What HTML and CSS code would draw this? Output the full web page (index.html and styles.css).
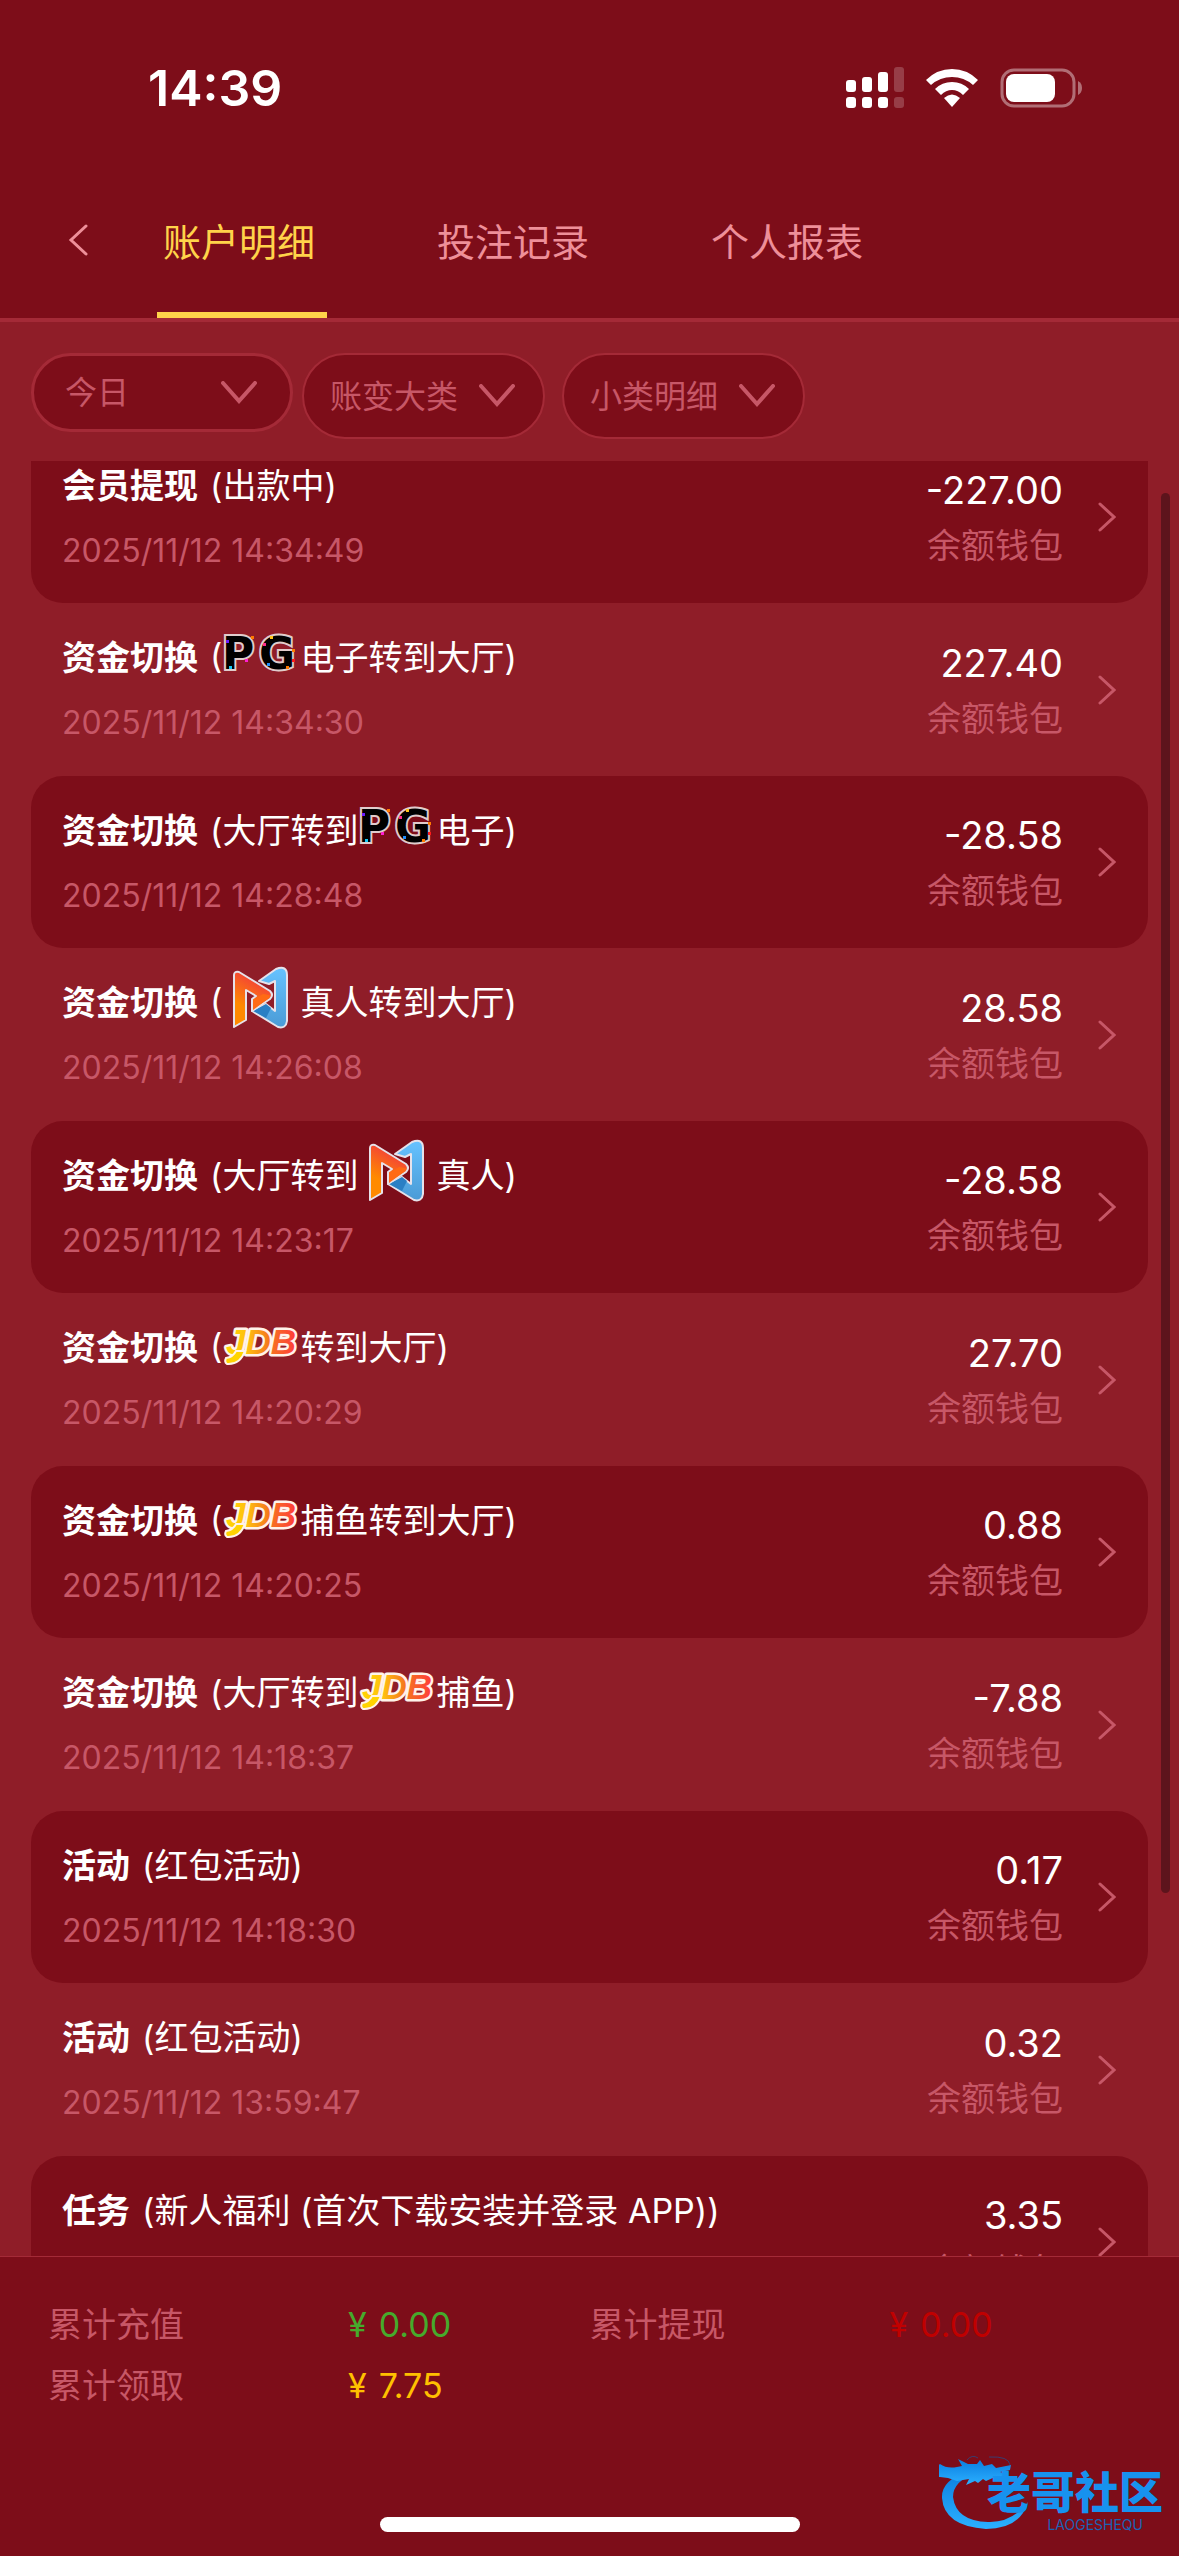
FILE: index.html
```html
<!DOCTYPE html>
<html lang="zh-CN">
<head>
    <meta charset="UTF-8">
    <meta name="viewport" content="width=device-width, initial-scale=1.0">
    <title>账户明细</title>
    <link rel="stylesheet" href="styles.css">
</head>
<body>
    <!-- shared icons, gradients and provider logos -->
    <svg class="defs" width="0" height="0" aria-hidden="true">
        <defs>
            <linearGradient id="jdbFill" x1="0" y1="0" x2="1" y2="0">
                <stop offset="0" stop-color="#ffd400"/>
                <stop offset="0.3" stop-color="#ffc010"/>
                <stop offset="0.6" stop-color="#f57a1c"/>
                <stop offset="1" stop-color="#ff3b3b"/>
            </linearGradient>
            <linearGradient id="nOrange" x1="0" y1="1" x2="0.4" y2="0">
                <stop offset="0.4" stop-color="#ff8a00"/>
                <stop offset="1" stop-color="#f23c3c"/>
            </linearGradient>
            <linearGradient id="nBlue" x1="0" y1="0" x2="0" y2="1">
                <stop offset="0" stop-color="#66c2ff"/>
                <stop offset="1" stop-color="#4a9bd6"/>
            </linearGradient>
        </defs>
        <symbol id="chevron-down" viewBox="0 0 36 24">
            <path d="M2 2l16 18L34 2" fill="none" stroke="currentColor" stroke-width="4" stroke-linecap="round"/>
        </symbol>
        <symbol id="chevron-right" viewBox="0 0 18 30">
            <path d="M2 2l14 13L2 28" fill="none" stroke="currentColor" stroke-width="3" stroke-linecap="round"/>
        </symbol>
        <symbol id="pg-pixels" viewBox="0 0 77 77">
            <path fill="#6a1bff" d="M4 22h3v3H4z"/>
            <path fill="#ff7a00" d="M29 18h3v3h-3zM70 31h3v3h-3zM64 48h3v3h-3z"/>
            <path fill="#ff1fd0" d="M23 41h3v3h-3z"/>
            <path fill="#14c8f5" d="M7 48h3v3H7z"/>
            <path fill="#ffc21a" d="M48 18h3v3h-3z"/>
            <path fill="#ff2b8a" d="M41 25h3v3h-3z"/>
            <path fill="#ff1a1a" d="M70 41h3v3h-3z"/>
            <path fill="#1f8fff" d="M45 45h3v3h-3z"/>
        </symbol>
        <symbol id="logo-n" viewBox="0 0 77 77">
            <path d="M37 18L54 6q11-4 11 6v46q-1 8-9 6L30 48l14-7 9 7V18l-6 3z" fill="url(#nBlue)" stroke="#e6e2ea" stroke-width="2" stroke-linejoin="round"/>
            <path d="M31 48l13-7 5 4-5 10z" fill="#2a7fc4"/>
            <path d="M12 12q0-4 5-3l31 19q4 4 0 8L30 48V36l4-3-10-6v30l-12 7z" fill="url(#nOrange)" stroke="#e6e2ea" stroke-width="2" stroke-linejoin="round"/>
            <path d="M31 47V37l10-6 6 1q2 1 0 3z" fill="#ff6a14"/>
        </symbol>
    </svg>

    <div class="app">
        <div class="status-bar">
            <span class="time">14:39</span>
            <div class="status-icons">
                <svg width="58" height="42" viewBox="0 0 58 42" fill="#fff">
                    <rect x="0" y="13" width="10" height="12" rx="3"/>
                    <rect x="16" y="10" width="10" height="15" rx="3"/>
                    <rect x="32" y="5" width="10" height="20" rx="3"/>
                    <rect x="48" y="0" width="10" height="25" rx="3" opacity="0.2"/>
                    <rect x="0" y="30" width="10" height="11" rx="3"/>
                    <rect x="16" y="30" width="10" height="11" rx="3"/>
                    <rect x="32" y="30" width="10" height="11" rx="3"/>
                    <rect x="48" y="30" width="10" height="11" rx="3" opacity="0.2"/>
                </svg>
                <svg width="52" height="38" viewBox="0 0 52 38" fill="#fff">
                    <path d="M0 11Q11 0 26 0T52 11l-5 5Q38 8 26 8T5 16z"/>
                    <path d="M9 20Q16 13 26 13T43 20l-6 6Q32 21 26 21T15 26z"/>
                    <path d="M18 29q8-7 16 0l-8 9z"/>
                </svg>
                <svg width="83" height="40" viewBox="0 0 83 40">
                    <rect x="2" y="2" width="72" height="36" rx="12" fill="none" stroke="#fff" stroke-width="3" opacity="0.4"/>
                    <rect x="6" y="6" width="49" height="28" rx="8" fill="#fff"/>
                    <path d="M78 13q4 2 4 7t-4 7z" fill="#fff" opacity="0.4"/>
                </svg>
            </div>
        </div>

        <header class="nav">
            <button class="back" type="button" aria-label="返回">
                <svg width="20" height="32" viewBox="0 0 20 32"><path d="M18 2L3 16l15 14" fill="none" stroke="currentColor" stroke-width="3" stroke-linecap="round"/></svg>
            </button>
            <nav class="tabs">
                <a class="tab active" href="#detail">账户明细</a>
                <a class="tab" href="#bets">投注记录</a>
                <a class="tab" href="#report">个人报表</a>
            </nav>
        </header>

        <div class="filters">
            <div class="filter filter-date">
                <select aria-label="日期"><option>今日</option></select>
                <svg class="arrow"><use href="#chevron-down"/></svg>
            </div>
            <div class="filter-group">
                <div class="filter">
                    <select aria-label="账变大类"><option>账变大类</option></select>
                    <svg class="arrow"><use href="#chevron-down"/></svg>
                </div>
                <div class="filter">
                    <select aria-label="小类明细"><option>小类明细</option></select>
                    <svg class="arrow"><use href="#chevron-down"/></svg>
                </div>
            </div>
        </div>

        <main class="list-wrap">
            <ul class="list">
                <li><a class="row" href="#1">
                    <div class="info">
                        <div class="title"><b>会员提现</b><span>(出款中)</span></div>
                        <div class="date">2025/11/12 14:34:49</div>
                    </div>
                    <div class="sum"><div class="amount">-227.00</div><div class="wallet">余额钱包</div></div>
                    <svg class="more"><use href="#chevron-right"/></svg>
                </a></li>
                <li><a class="row" href="#2">
                    <div class="info">
                        <div class="title"><b>资金切换</b><span>(</span><svg class="logo logo-pg" viewBox="0 0 77 77"><text x="0" y="51">P</text><text x="37" y="51">G</text><use href="#pg-pixels"/></svg><span>电子转到大厅)</span></div>
                        <div class="date">2025/11/12 14:34:30</div>
                    </div>
                    <div class="sum"><div class="amount">227.40</div><div class="wallet">余额钱包</div></div>
                    <svg class="more"><use href="#chevron-right"/></svg>
                </a></li>
                <li><a class="row" href="#3">
                    <div class="info">
                        <div class="title"><b>资金切换</b><span>(大厅转到</span><svg class="logo logo-pg" viewBox="0 0 77 77"><text x="0" y="51">P</text><text x="37" y="51">G</text><use href="#pg-pixels"/></svg><span>电子)</span></div>
                        <div class="date">2025/11/12 14:28:48</div>
                    </div>
                    <div class="sum"><div class="amount">-28.58</div><div class="wallet">余额钱包</div></div>
                    <svg class="more"><use href="#chevron-right"/></svg>
                </a></li>
                <li><a class="row" href="#4">
                    <div class="info">
                        <div class="title"><b>资金切换</b><span>(</span><svg class="logo"><use href="#logo-n"/></svg><span>真人转到大厅)</span></div>
                        <div class="date">2025/11/12 14:26:08</div>
                    </div>
                    <div class="sum"><div class="amount">28.58</div><div class="wallet">余额钱包</div></div>
                    <svg class="more"><use href="#chevron-right"/></svg>
                </a></li>
                <li><a class="row" href="#5">
                    <div class="info">
                        <div class="title"><b>资金切换</b><span>(大厅转到</span><svg class="logo"><use href="#logo-n"/></svg><span>真人)</span></div>
                        <div class="date">2025/11/12 14:23:17</div>
                    </div>
                    <div class="sum"><div class="amount">-28.58</div><div class="wallet">余额钱包</div></div>
                    <svg class="more"><use href="#chevron-right"/></svg>
                </a></li>
                <li><a class="row" href="#6">
                    <div class="info">
                        <div class="title"><b>资金切换</b><span>(</span><svg class="logo logo-jdb" viewBox="0 0 77 77"><text x="4" y="46">JDB</text><path d="M14 43q-3 6-10 7-2 4 1 6 13 1 18-13z"/></svg><span>转到大厅)</span></div>
                        <div class="date">2025/11/12 14:20:29</div>
                    </div>
                    <div class="sum"><div class="amount">27.70</div><div class="wallet">余额钱包</div></div>
                    <svg class="more"><use href="#chevron-right"/></svg>
                </a></li>
                <li><a class="row" href="#7">
                    <div class="info">
                        <div class="title"><b>资金切换</b><span>(</span><svg class="logo logo-jdb" viewBox="0 0 77 77"><text x="4" y="46">JDB</text><path d="M14 43q-3 6-10 7-2 4 1 6 13 1 18-13z"/></svg><span>捕鱼转到大厅)</span></div>
                        <div class="date">2025/11/12 14:20:25</div>
                    </div>
                    <div class="sum"><div class="amount">0.88</div><div class="wallet">余额钱包</div></div>
                    <svg class="more"><use href="#chevron-right"/></svg>
                </a></li>
                <li><a class="row" href="#8">
                    <div class="info">
                        <div class="title"><b>资金切换</b><span>(大厅转到</span><svg class="logo logo-jdb" viewBox="0 0 77 77"><text x="4" y="46">JDB</text><path d="M14 43q-3 6-10 7-2 4 1 6 13 1 18-13z"/></svg><span>捕鱼)</span></div>
                        <div class="date">2025/11/12 14:18:37</div>
                    </div>
                    <div class="sum"><div class="amount">-7.88</div><div class="wallet">余额钱包</div></div>
                    <svg class="more"><use href="#chevron-right"/></svg>
                </a></li>
                <li><a class="row" href="#9">
                    <div class="info">
                        <div class="title"><b>活动</b><span>(红包活动)</span></div>
                        <div class="date">2025/11/12 14:18:30</div>
                    </div>
                    <div class="sum"><div class="amount">0.17</div><div class="wallet">余额钱包</div></div>
                    <svg class="more"><use href="#chevron-right"/></svg>
                </a></li>
                <li><a class="row" href="#10">
                    <div class="info">
                        <div class="title"><b>活动</b><span>(红包活动)</span></div>
                        <div class="date">2025/11/12 13:59:47</div>
                    </div>
                    <div class="sum"><div class="amount">0.32</div><div class="wallet">余额钱包</div></div>
                    <svg class="more"><use href="#chevron-right"/></svg>
                </a></li>
                <li><a class="row" href="#11">
                    <div class="info">
                        <div class="title"><b>任务</b><span>(新人福利 (首次下载安装并登录 APP))</span></div>
                    </div>
                    <div class="sum"><div class="amount">3.35</div><div class="wallet">余额钱包</div></div>
                    <svg class="more"><use href="#chevron-right"/></svg>
                </a></li>
            </ul>
            <div class="scroll-thumb"></div>
        </main>

        <footer class="totals">
            <dl>
                <div><dt>累计充值</dt><dd class="green"><span>¥</span><span>0.00</span></dd></div>
                <div><dt>累计提现</dt><dd class="red"><span>¥</span><span>0.00</span></dd></div>
                <div><dt>累计领取</dt><dd class="yellow"><span>¥</span><span>7.75</span></dd></div>
            </dl>
            <div class="home-bar"></div>
            <div class="watermark">
                <svg class="dragon" width="94" height="76" viewBox="0 0 94 76">
                    <defs>
                        <linearGradient id="dragonFill" x1="0" y1="0" x2="0" y2="1">
                            <stop offset="0" stop-color="#0b7de0"/>
                            <stop offset="1" stop-color="#2bb0ff"/>
                        </linearGradient>
                    </defs>
                    <g fill="url(#dragonFill)">
                        <path d="M30 17Q2 26 3 44q2 28 44 31 34 0 42-27-16 21-40 20-32-1-35-25 0-16 23-24z"/>
                        <path d="M1 10q7 5 17 3l5-1-4-7 10 5 9 0 3-4 4 6 8-2 4 4 15-3-1 5-10 2 8 2-1 4-12-1-9 4-3-2-5 4-3-2-9 4 3-6-12 2-9-3-8-1q-7 0-8-8z"/>
                    </g>
                    <path d="M28 6q5-6 11-2M50 3q20-1 21 8" fill="none" stroke="#0b5da8" stroke-width="1" opacity="0.6"/>
                </svg>
                <div class="brand">老哥社区</div>
                <div class="brand-sub">LAOGESHEQU</div>
            </div>
        </footer>
    </div>
</body>
</html>
```

FILE: styles.css
```css
* {
    box-sizing: border-box;
}
body {
    margin: 0;
    font-family: Inter, "Noto Sans CJK SC", sans-serif;
    font-size: 34px;
    color: #fff;
    background-color: #7d0d19;
}
.defs {
    position: absolute;
}
.app {
    height: 100vh;
    display: flex;
    flex-direction: column;
    overflow: hidden;
}
.status-bar {
    height: 176px;
    padding: 0 96px 0 148px;
    display: flex;
    align-items: center;
    justify-content: space-between;
}
.time {
    font-size: 50px;
    font-weight: 600;
}
.status-icons {
    display: flex;
    align-items: center;
    gap: 22px;
}

/* header tabs */
.nav {
    height: 146px;
    display: flex;
    border-bottom: 4px solid #a42a37;
}
.back {
    width: 105px;
    padding: 0 0 12px 68px;
    border: none;
    background: none;
    color: #ee8f99;
    text-align: left;
    cursor: pointer;
}
.tabs {
    display: flex;
}
.tab {
    width: 170px;
    margin: 0 52px;
    padding: 38px 6px 0 0;
    line-height: 56px;
    font-size: 38px;
    text-align: center;
    color: #ee8f99;
    text-decoration: none;
}
.tab.active {
    color: #ffd34a;
    border-bottom: 6px solid #ffd34a;
}

/* filters */
.filters {
    display: flex;
    align-items: flex-start;
    gap: 9px;
    padding: 31px 31px 22px;
    background-color: #8f1d28;
}
.filter-group {
    display: flex;
    gap: 17px;
}
.filter {
    position: relative;
}
.filter select {
    appearance: none;
    width: 243px;
    height: 86px;
    padding: 0 26px;
    border: 2px solid #a42a37;
    border-radius: 43px;
    background-color: #7d0d19;
    color: #c75767;
    font-family: inherit;
    font-size: 32px;
}
.filter-date select {
    width: 262px;
    height: 79px;
    padding: 0 31px;
    border-width: 3px;
}
.arrow {
    position: absolute;
    right: 30px;
    top: 50%;
    width: 36px;
    height: 24px;
    margin-top: -12px;
    color: #c75767;
    pointer-events: none;
}
.filter-date .arrow {
    right: 36px;
}

/* records */
.list-wrap {
    flex: 1;
    min-height: 0;
    position: relative;
    overflow: hidden;
    padding: 0 31px;
    background-color: #8f1d28;
}
.list {
    list-style: none;
    margin: -30px 0 0;
    padding: 0;
}
.row {
    height: 173px;
    display: flex;
    align-items: center;
    padding: 0 32px 0 31px;
    color: inherit;
    text-decoration: none;
}
li:nth-child(odd) .row {
    height: 172px;
    border-radius: 32px;
    background-color: #7d0d19;
}
.info {
    flex: 1;
    align-self: flex-start;
    padding-top: 14px;
}
.title {
    height: 77px;
    display: flex;
    align-items: center;
    white-space: nowrap;
}
.title b {
    margin-right: 12px;
    font-weight: 700;
}
.logo {
    width: 77px;
    height: 77px;
    flex: none;
    margin: 1px 1px 0 0;
}
.logo text {
    font-weight: bold;
    paint-order: stroke;
}
.logo-pg text {
    font-family: "DejaVu Sans", sans-serif;
    font-size: 44px;
    stroke: #e0cccc;
    stroke-width: 4px;
}
.logo-pg text {
    fill: #000;
}
.logo-jdb text {
    font-family: "Liberation Sans", sans-serif;
    font-size: 35px;
    font-style: italic;
    fill: url(#jdbFill);
    stroke: #fff3ea;
    stroke-width: 5px;
    stroke-linejoin: round;
}
.logo-jdb path {
    fill: #ffd400;
    stroke: #fff3ea;
    stroke-width: 2px;
}
.date {
    font-size: 32px;
    line-height: 58px;
    color: #c75767;
}
.sum {
    padding-top: 2px;
    text-align: right;
    line-height: 56px;
}
.amount {
    font-size: 38px;
}
.wallet {
    color: #c75767;
}
.more {
    width: 18px;
    height: 30px;
    margin-left: 35px;
    color: #c75767;
}
.scroll-thumb {
    position: absolute;
    top: 32px;
    right: 9px;
    width: 9px;
    height: 78%;
    border-radius: 5px;
    background-color: #5d141c;
}

/* totals */
.totals {
    position: relative;
    min-height: 300px;
    padding: 37px 48px 0;
    border-top: 1px solid #a42a37;
}
.totals dl {
    margin: 0;
    display: grid;
    grid-template-columns: 1fr 1fr;
    line-height: 61px;
}
.totals dl div {
    display: flex;
}
.totals dt {
    width: 300px;
    color: #c75767;
}
.totals dd {
    margin: 0;
    display: flex;
    gap: 12px;
}
.green {
    color: #46aa2c;
}
.red {
    color: #c00000;
}
.yellow {
    color: #ffc000;
}
.home-bar {
    position: absolute;
    left: 50%;
    bottom: 24px;
    width: 420px;
    height: 15px;
    margin-left: -210px;
    border-radius: 8px;
    background-color: #fff;
}

/* site watermark */
.watermark {
    position: absolute;
    right: 16px;
    bottom: 24px;
    width: 224px;
    height: 78px;
}
.dragon {
    position: absolute;
    left: 0;
    top: 0;
}
.brand {
    position: absolute;
    right: 0;
    top: 17px;
    line-height: 44px;
    font-size: 44px;
    font-weight: 900;
    color: #1792ef;
}
.brand-sub {
    position: absolute;
    right: 20px;
    bottom: 0;
    line-height: 14px;
    font-size: 14px;
    color: #1a62b4;
}
```
